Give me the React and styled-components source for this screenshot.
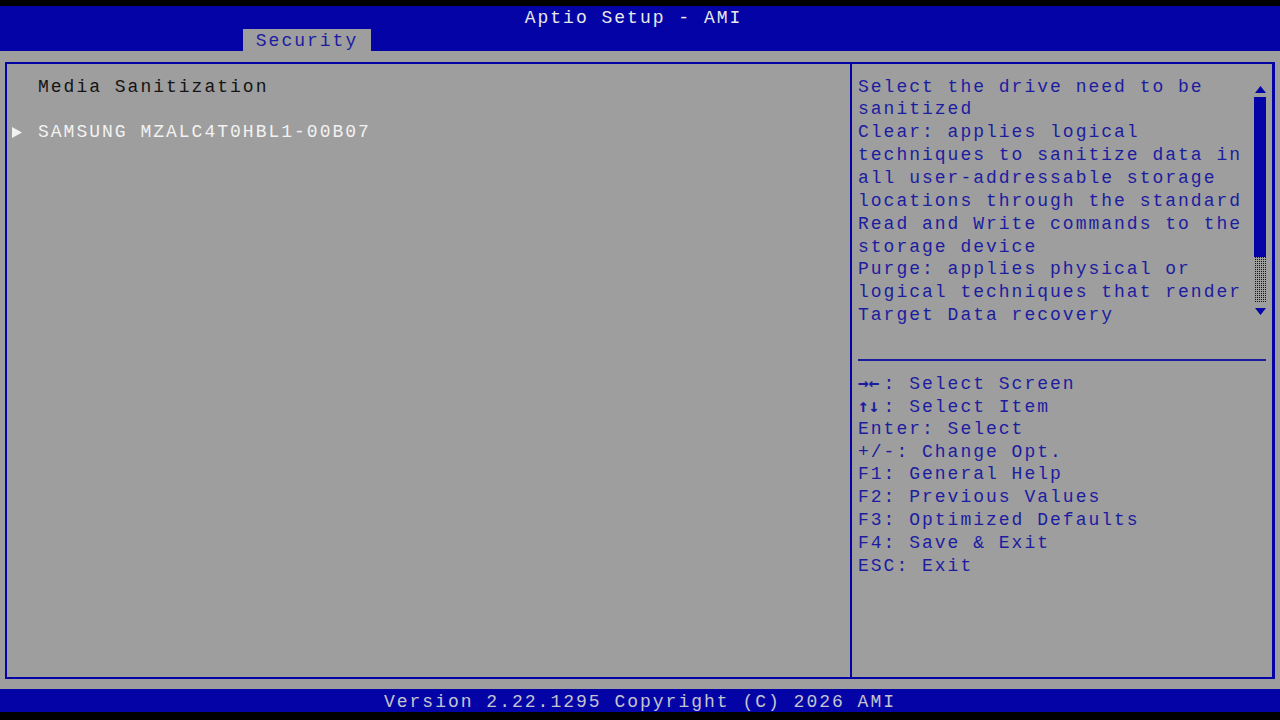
import React from "react";
import styled, { createGlobalStyle } from "styled-components";

const GRAY = "#9e9e9e";
const BLUE = "#0404a6";
const INK = "#1c1ca0";

const Global = createGlobalStyle`
  html, body { margin: 0; padding: 0; background: #000; }
  body { font-family: "Liberation Mono", "DejaVu Sans Mono", monospace; }
`;

const Screen = styled.div`
  width: 1280px;
  height: 720px;
  display: flex;
  flex-direction: column;
  background: #000;
  font-family: "Liberation Mono", "DejaVu Sans Mono", monospace;
  font-size: 18px;
  letter-spacing: 2px;
  line-height: 22.85px;
  overflow: hidden;
`;

const BlackStrip = styled.div`
  height: ${(p) => p.$h}px;
  background: #000;
  flex: none;
`;

const Header = styled.header`
  height: 45px;
  background: ${BLUE};
  display: flex;
  flex-direction: column;
  flex: none;
`;

const Title = styled.div`
  height: 23px;
  box-sizing: border-box;
  padding: 2px 13px 0 0;
  display: flex;
  align-items: center;
  justify-content: center;
  color: #e8e8e8;
  white-space: pre;
`;

const TabRow = styled.div`
  height: 22px;
  display: flex;
  padding-left: 243px;
`;

const Tab = styled.div`
  width: 128px;
  height: 22px;
  box-sizing: border-box;
  padding-top: 2px;
  background: ${GRAY};
  color: ${INK};
  display: flex;
  align-items: center;
  justify-content: center;
`;

const Body = styled.main`
  flex: none;
  height: 638px;
  background: ${GRAY};
  padding: 11px 5px 10px 5px;
  box-sizing: border-box;
  display: flex;
`;

const Frame = styled.div`
  flex: 1;
  border: 2px solid ${BLUE};
  border-right-width: 3px;
  display: grid;
  grid-template-columns: 843px 2px 1fr;
`;

const Divider = styled.div`
  background: ${BLUE};
`;

const LeftPanel = styled.section`
  padding-top: 11.6px;
  display: flex;
  flex-direction: column;
`;

const Row = styled.div`
  display: flex;
  align-items: center;
  height: 22.85px;
  color: ${(p) => (p.$selected ? "#f2f2f2" : "#141414")};
  white-space: pre;
`;

const Marker = styled.span`
  width: 31px;
  display: flex;
  align-items: center;
  padding-left: 5px;
  box-sizing: border-box;
  flex: none;
`;

const RightPanel = styled.section`
  display: flex;
  flex-direction: column;
  padding: 0 6px 0 6px;
`;

const HelpArea = styled.div`
  height: 295px;
  display: flex;
  justify-content: space-between;
  flex: none;
`;

const HelpText = styled.div`
  padding-top: 11.6px;
  color: ${INK};
  white-space: pre;
`;

const Scrollbar = styled.div`
  width: 12px;
  margin-top: 18px;
  display: flex;
  flex-direction: column;
  align-items: center;
  height: 237px;
`;

const ArrowBox = styled.div`
  height: ${(p) => p.$h}px;
  display: flex;
  align-items: center;
  justify-content: center;
  flex: none;
`;

const Thumb = styled.div`
  width: 12px;
  height: 160px;
  background: ${BLUE};
  flex: none;
`;

const Track = styled.div`
  width: 12px;
  height: 46px;
  flex: none;
  background-color: ${GRAY};
  background-image: repeating-conic-gradient(${BLUE} 0 25%, transparent 0 100%);
  background-size: 2px 2px;
`;

const Legend = styled.div`
  border-top: 2px solid ${INK};
  padding-top: 11px;
  color: ${INK};
  white-space: pre;
`;

const Line = styled.div`
  height: 22.85px;
`;

const Arrows = styled.span`
  font-family: "DejaVu Sans Mono", monospace;
  font-weight: bold;
  letter-spacing: 0;
  display: inline-block;
  width: 25.6px;
  text-align: left;
`;

const Footer = styled.footer`
  height: 23px;
  box-sizing: border-box;
  padding-top: 3px;
  flex: none;
  background: ${BLUE};
  color: #c4c4d0;
  display: flex;
  align-items: center;
  justify-content: center;
`;

const Tri = ({ dir = "right", color, w, h }) => {
  const pts =
    dir === "right"
      ? `0,0 ${w},${h / 2} 0,${h}`
      : dir === "up"
      ? `0,${h} ${w / 2},0 ${w},${h}`
      : `0,0 ${w},0 ${w / 2},${h}`;
  return (
    <svg width={w} height={h} viewBox={`0 0 ${w} ${h}`} style={{ display: "block" }}>
      <polygon points={pts} fill={color} />
    </svg>
  );
};

const help = [
  "Select the drive need to be",
  "sanitized",
  "Clear: applies logical",
  "techniques to sanitize data in",
  "all user-addressable storage",
  "locations through the standard",
  "Read and Write commands to the",
  "storage device",
  "Purge: applies physical or",
  "logical techniques that render",
  "Target Data recovery",
];

const keys = [
  { a: "→←", t: ": Select Screen" },
  { a: "↑↓", t: ": Select Item" },
  { t: "Enter: Select" },
  { t: "+/-: Change Opt." },
  { t: "F1: General Help" },
  { t: "F2: Previous Values" },
  { t: "F3: Optimized Defaults" },
  { t: "F4: Save & Exit" },
  { t: "ESC: Exit" },
];

export default function App() {
  return (
    <>
      <Global />
      <Screen>
        <BlackStrip $h={6} />
        <Header>
          <Title>Aptio Setup - AMI</Title>
          <TabRow>
            <Tab>Security</Tab>
          </TabRow>
        </Header>
        <Body>
          <Frame>
            <LeftPanel>
              <Row>
                <Marker />
                Media Sanitization
              </Row>
              <Row />
              <Row $selected>
                <Marker>
                  <Tri dir="right" color="#f2f2f2" w={10} h={11} />
                </Marker>
                SAMSUNG MZALC4T0HBL1-00B07
              </Row>
            </LeftPanel>
            <Divider />
            <RightPanel>
              <HelpArea>
                <HelpText>
                  {help.map((t, i) => (
                    <Line key={i}>{t}</Line>
                  ))}
                </HelpText>
                <Scrollbar>
                  <ArrowBox $h={15}>
                    <Tri dir="up" color={BLUE} w={11} h={7} />
                  </ArrowBox>
                  <Thumb />
                  <Track />
                  <ArrowBox $h={16}>
                    <Tri dir="down" color={BLUE} w={11} h={7} />
                  </ArrowBox>
                </Scrollbar>
              </HelpArea>
              <Legend>
                {keys.map((k, i) => (
                  <Line key={i}>
                    {k.a && <Arrows>{k.a}</Arrows>}
                    {k.t}
                  </Line>
                ))}
              </Legend>
            </RightPanel>
          </Frame>
        </Body>
        <Footer>Version 2.22.1295 Copyright (C) 2026 AMI</Footer>
        <BlackStrip $h={8} />
      </Screen>
    </>
  );
}
